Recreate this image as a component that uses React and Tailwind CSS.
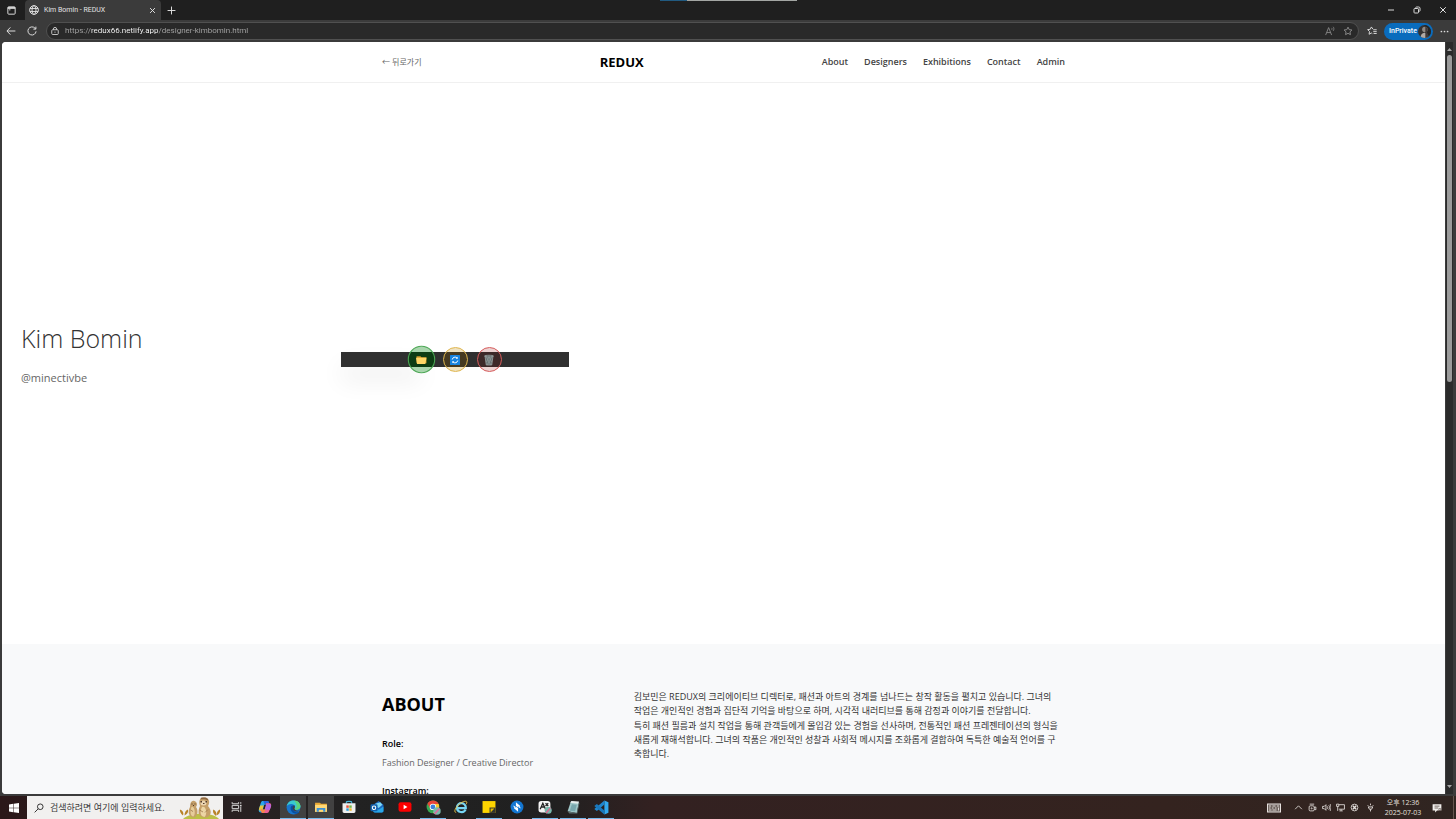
import React from "react";

const navLinks = ["About", "Designers", "Exhibitions", "Contact", "Admin"];

function Svg({ className, children, box = "0 0 16 16" }) {
  return (
    <svg viewBox={box} className={className} fill="none" stroke="currentColor" aria-hidden="true">
      {children}
    </svg>
  );
}

const StarPath = "M8 1.8l1.9 4 4.4.6-3.2 3 .8 4.4L8 11.7l-3.900 2.1.8-4.400-3.200-3 4.400-.600z";

function TabStrip() {
  return (
    <div className="relative flex h-5 shrink-0 items-stretch bg-[#1f1f1f] text-[#e3e3e3]">
      <div className="absolute inset-x-0 top-0 flex h-px justify-center">
        <span className="w-[27px] bg-[#215a80]" />
        <span className="w-[110px] bg-[#a3a6a3]" />
      </div>
      <button aria-label="Tab actions" className="flex w-[25px] items-center pl-[7px]">
        <Svg className="size-[9px]">
          <rect x="1.500" y="1.500" width="13" height="13" rx="1.500" strokeWidth="1.700" />
          <path d="M1.500 3.500h13" strokeWidth="3" />
          <path d="M5 4v4" strokeWidth="1.500" />
        </Svg>
      </button>
      <div className="flex w-[136px] items-center rounded-t-[4px] bg-[#3b3b3b] pl-1 pr-[5px]">
        <Svg className="size-[10px]">
          <circle cx="8" cy="8" r="7" strokeWidth="1.500" />
          <ellipse cx="8" cy="8" rx="3.200" ry="7" strokeWidth="1.500" />
          <path d="M1.500 5.500h13M1.500 10.500h13" strokeWidth="1.500" />
        </Svg>
        <span className="ml-[5px] flex-1 whitespace-nowrap font-[Roboto,sans-serif] text-[7px] leading-3">Kim Bomin - REDUX</span>
        <button aria-label="Close tab">
          <Svg className="size-[7px]"><path d="M2.500 2.500l11 11M13.500 2.500l-11 11" strokeWidth="2.200" /></Svg>
        </button>
      </div>
      <button aria-label="New tab" className="ml-[6px] flex items-center">
        <Svg className="size-[9px]"><path d="M8 1v14M1 8h14" strokeWidth="1.700" /></Svg>
      </button>
      <div className="ml-auto flex items-center gap-[18px] pr-[9px]">
        <button aria-label="Minimize"><Svg className="size-2"><path d="M2 8h12" strokeWidth="1.900" /></Svg></button>
        <button aria-label="Restore">
          <Svg className="size-2">
            <rect x="2" y="5" width="9" height="9" rx="1.500" strokeWidth="1.900" />
            <path d="M5 3.500C5.500 2.500 6 2 7 2h4.500C13 2 14 3 14 4.500V9c0 1-.500 1.500-1.500 2" strokeWidth="1.900" />
          </Svg>
        </button>
        <button aria-label="Close"><Svg className="size-2"><path d="M2.500 2.500l11 11M13.500 2.500l-11 11" strokeWidth="2" /></Svg></button>
      </div>
    </div>
  );
}

function Toolbar() {
  return (
    <div className="flex h-[22px] shrink-0 items-center bg-[#3b3b3b] text-[#dcdcdc]">
      <button aria-label="Back" className="ml-[6px]">
        <Svg className="size-[10px]"><path d="M15 8H1.500M7 2.200L1.500 8 7 13.800" strokeWidth="1.600" /></Svg>
      </button>
      <button aria-label="Refresh" className="ml-[11px]">
        <Svg className="size-[10px]"><path d="M14.500 8.500A6.500 6.500 0 1 1 12.800 3.500L14 4.800M14.200 1v4h-4" strokeWidth="1.600" /></Svg>
      </button>
      <div className="ml-[9px] flex h-[18px] flex-1 items-center rounded-full border border-[#505050] bg-[#292929] pl-1 pr-[5px]">
        <Svg className="size-2">
          <rect x="1.500" y="5.500" width="13" height="9.500" rx="1.800" strokeWidth="1.700" />
          <path d="M4.800 5.500V4a3.200 3.200 0 0 1 6.400 0v1.500" strokeWidth="1.700" />
          <circle cx="8" cy="10.200" r="1.200" fill="currentColor" stroke="none" />
        </Svg>
        <input
          aria-label="Address"
          defaultValue="https://redux66.netlify.app/designer-kimbomin.html"
          className="ml-[6px] h-3 min-w-0 flex-1 bg-[linear-gradient(90deg,#a8a8a8_26px,#ffffff_26px,#ffffff_93px,#a8a8a8_93px)] bg-clip-text font-[Roboto,sans-serif] text-[8px] leading-3 text-transparent outline-none"
        />
        <button aria-label="Read aloud" className="text-[#8c8c8c]">
          <Svg className="size-[10px]">
            <path d="M1 14.500L5.800 2.500l4.800 12M2.800 10.500h6" strokeWidth="1.400" />
            <path d="M10.500 3c.9.900.9 2.300 0 3.200M13 1.200c1.700 2 1.700 4.700 0 6.700" strokeWidth="1.200" />
          </Svg>
        </button>
        <button aria-label="Add to favorites" className="ml-2 text-[#8c8c8c]">
          <Svg className="size-[10px]"><path d={StarPath} strokeWidth="1.500" strokeLinejoin="round" /></Svg>
        </button>
      </div>
      <button aria-label="Favorites" className="ml-2">
        <Svg className="size-[10px]">
          <path d="M9.500 5L7 1.500 5.200 5.200 1 5.800l3 3-.700 4.400L7 11.200l1.500 1M10 6h5.500M10 9h5.500M10.500 12h5" strokeWidth="1.500" />
        </Svg>
      </button>
      <button className="ml-[7px] flex h-[17px] w-[49px] items-center justify-between whitespace-nowrap rounded-full bg-[#0a6cbd] pl-[5px] pr-[2px] font-[Roboto,sans-serif] text-[7px] font-medium leading-3 text-white">
        InPrivate
        <Svg className="size-[13px] shrink-0 rounded-full">
          <rect width="16" height="16" fill="#343232" stroke="none" />
          <path d="M8 0h8v16H9z" fill="#252525" stroke="none" />
          <circle cx="8.500" cy="5.600" r="3.400" fill="#8f8984" stroke="none" />
          <path d="M3 16c0-4 2-6 5-6.500 3 .500 5 2.500 5 6.500z" fill="#b1aaa5" stroke="none" />
          <path d="M9 2.500c3 0 4 3 2 6L14 16H9z" fill="#3f3938" stroke="none" />
        </Svg>
      </button>
      <button aria-label="Settings and more" className="ml-[7px] mr-[7px]">
        <Svg className="size-[9px]">
          <g fill="currentColor" stroke="none"><circle cx="2.500" cy="8" r="1.500" /><circle cx="8" cy="8" r="1.500" /><circle cx="13.500" cy="8" r="1.500" /></g>
        </Svg>
      </button>
    </div>
  );
}

function SiteHeader() {
  return (
    <header className="h-[41px] shrink-0 border-b border-[#f0f0f0] bg-white">
      <div className="mx-auto flex h-full max-w-[683px] items-center justify-between">
        <a href="#back" className="text-[8px] leading-3 text-[#666666]">← 뒤로가기</a>
        <a href="#home" className="text-[13px] font-bold leading-5 text-black">REDUX</a>
        <nav className="flex gap-4 text-[9px] font-semibold leading-3 text-[#444444]">
          {navLinks.map((label) => <a key={label} href={"#" + label.toLowerCase()}>{label}</a>)}
        </nav>
      </div>
    </header>
  );
}

function FilmControls() {
  const base = "flex size-[25px] items-center justify-center rounded-full border ";
  return (
    <div className="relative flex h-[15px] w-[228px] items-center justify-center gap-[9px] bg-[#303030]">
      <span className="absolute inset-y-0 left-0 -z-10 w-[80px] shadow-[0_14px_24px_rgba(0,0,0,0.07)]" />
      <button aria-label="Upload" className={base + "scale-110 border-[#4aa653] bg-[linear-gradient(#a9d5ad_5px,#0d3d14_5px,#0d3d14_18px,#a9d5ad_18px)]"}>
        <Svg className="h-[9px] w-[11px]" box="0 0 22 18">
          <path d="M2 3h7l2 2h9v11H2z" fill="#d49b2a" stroke="none" />
          <path d="M1 6h19l-2 11H3z" fill="#ffd767" stroke="none" />
        </Svg>
      </button>
      <button aria-label="Replace" className={base + "border-[#dfb64e] bg-[linear-gradient(#efe2c2_4px,#463a21_4px,#463a21_19px,#efe2c2_19px)]"}>
        <Svg className="size-[10px]" box="0 0 20 20">
          <rect width="20" height="20" rx="1" fill="#1683e0" stroke="none" />
          <path d="M4.500 9a5.600 5.600 0 0 1 9.500-3M15.500 11a5.600 5.600 0 0 1-9.500 3" stroke="#fff" strokeWidth="2" />
          <path d="M15.500 3.500v4h-4zM4.500 16.500v-4h4z" fill="#fff" stroke="none" />
        </Svg>
      </button>
      <button aria-label="Delete" className={base + "border-[#d65c5c] bg-[linear-gradient(#ecd2d2_4px,#3d2929_4px,#3d2929_19px,#ecd2d2_19px)]"}>
        <Svg className="h-[12px] w-[10px]" box="0 0 20 24">
          <path d="M2 4h16l-2.500 18h-11z" fill="#687273" stroke="#9da7a7" strokeWidth="1.500" />
          <path d="M5 6l8 15M10 6l5 10M15 6L7 21M10 6L5 16" stroke="#a4adad" strokeWidth="1" />
          <path d="M1 4c0-2 18-2 18 0s-18 2-18 0z" fill="#394141" stroke="#adb5b5" strokeWidth="1.300" />
        </Svg>
      </button>
    </div>
  );
}

function Hero() {
  return (
    <section className="relative z-0 flex h-[561px] shrink-0 items-center bg-white pb-2 pl-[19px]">
      <div className="w-[320px] pb-[14px]">
        <h1 className="text-[25px] font-light leading-9 text-[#333333]">Kim Bomin</h1>
        <p className="mt-[14px] text-[11px] leading-4 text-[#666666]">@minectivbe</p>
      </div>
      <FilmControls />
    </section>
  );
}

function About() {
  return (
    <section className="shrink-0 bg-[#f8f9fa] py-[46px]">
      <div className="mx-auto grid max-w-[683px] grid-cols-[1fr_2fr] gap-9">
        <div>
          <h2 className="pt-[2px] text-[18px] font-bold leading-6 text-black">ABOUT</h2>
          <dl className="mt-[22px] text-[9px]">
            <dt className="font-semibold leading-3 text-black">Role:</dt>
            <dd className="mt-[7px] leading-3 text-[#666666]">Fashion Designer / Creative Director</dd>
            <dt className="mt-4 font-semibold leading-3 text-black">Instagram:</dt>
          </dl>
        </div>
        <div className="whitespace-nowrap text-[9px] leading-[14px] text-[#333333]">
          <p>
            김보민은 REDUX의 크리에이티브 디렉터로, 패션과 아트의 경계를 넘나드는 창작 활동을 펼치고 있습니다. 그녀의<br />
            작업은 개인적인 경험과 집단적 기억을 바탕으로 하며, 시각적 내러티브를 통해 감정과 이야기를 전달합니다.
          </p>
          <p className="mt-px">
            특히 패션 필름과 설치 작업을 통해 관객들에게 몰입감 있는 경험을 선사하며, 전통적인 패션 프레젠테이션의 형식을<br />
            새롭게 재해석합니다. 그녀의 작품은 개인적인 성찰과 사회적 메시지를 조화롭게 결합하여 독특한 예술적 언어를 구<br />
            축합니다.
          </p>
        </div>
      </div>
    </section>
  );
}

function Scrollbar() {
  return (
    <div className="flex w-[7px] shrink-0 flex-col items-center bg-[#2b2b2b] py-[5px]">
      <Svg className="h-[5px] w-[5px] shrink-0" box="0 0 10 10"><path d="M0 8l5-6 5 6z" fill="#a5a5a5" stroke="none" /></Svg>
      <div className="flex w-full flex-1 flex-col items-center py-[3px]">
        <div className="h-[45%] w-[5px] rounded-full bg-[#9b9b9b]" />
      </div>
      <Svg className="h-[5px] w-[5px] shrink-0" box="0 0 10 10"><path d="M0 2l5 6 5-6z" fill="#a5a5a5" stroke="none" /></Svg>
    </div>
  );
}

const apps = [
  { name: "Task view", art: (
    <g stroke="#d8d8d8" strokeWidth="1.800" fill="none"><path d="M4 4v3h12V4M4 22v-3h12v3M4 10h12v6H4zM20 4v3M20 13v9" /><path d="M18.500 9h3v3h-3z" fill="#d8d8d8" stroke="none" /></g>) },
  { name: "Copilot", art: (
    <g>
      <path d="M9 2h8c2 0 3 1 3.500 3l1 3h-7L11 20c-.500 2-1.500 3-3.500 3H5c-4 0-4-4-3-7L5 6c1-3 2-4 4-4z" fill="#2aa8e8" />
      <path d="M9 2h8c2 0 3 1 3.500 3l1 3h-7c-2 0-3-1-3.500-3S10 2 9 2z" fill="#2864e0" />
      <path d="M2 16l2-6h7l-3 10H4c-2 0-2.500-2-2-4z" fill="#e9c53c" />
      <path d="M17 24H9c-2 0-3-1-3.500-3l-1-3h7L15 6h6c4 0 4 4 3 7l-3 7c-1 3-2 4-4 4z" fill="#eb5f91" />
      <path d="M15 8h6c4 0 3 3 2.500 5L22 18h-9z" fill="#ae66e8" />
      <path d="M9 24c2 0 3-1 4-4l1-3h-8l-1 1c1 4 2 6 4 6z" fill="#f58a45" />
      <path d="M11.500 9h3l-2.200 8h-3z" fill="#252023" />
    </g>) },
  { name: "Microsoft Edge", active: true, wide: true, art: (
    <g>
      <circle cx="13" cy="13" r="12" fill="#1676ce" />
      <path d="M1.200 11C2.500 4 7.500 1 13 1c7 0 12 5 12 10 0 4-3 6-6.500 6-3 0-4-1-4-2 0-1 1-1 1-3 0-3-3-5-6.500-5C5 7 2 9 1.200 11z" fill="#39c8d0" />
      <path d="M14 1c7 0 11 5 11 10 0 4-3 6-6.500 6-3 0-4-1-4-2 3 0 5-3 4-6-1-4-3-6-4.500-8z" fill="#5bd27c" />
      <path d="M9 11c-3 5 1 13 9 13 2 0 4-1.500 5-3-5 1-10-1-10.500-6C12 12 14 11 15 10c-2-1-5 0-6 1z" fill="#0b4e9e" />
      <path d="M14.500 14c1-1 1-1 1-2 0-1-.500-2-1.500-3-3 2-3 8 1 10s7 1 8-1c-4 1.500-8 1-8.500-4z" fill="#41403f" />
    </g>) },
  { name: "File Explorer", active: true, art: (
    <g>
      <path d="M2 5h9l2 2h11v15H2z" fill="#e9a935" />
      <path d="M2 9h22v13H2z" fill="#ffd978" />
      <path d="M5 22v-7h16v7h-4v-4H9v4z" fill="#3d91d5" />
    </g>) },
  { name: "Microsoft Store", art: (
    <g>
      <path d="M8 7V4c0-2 10-2 10 0v3" stroke="#4ab7dc" strokeWidth="2" fill="none" />
      <path d="M1 6h24v15c0 2-1 3-3 3H4c-2 0-3-1-3-3z" fill="#eeeeee" />
      <path d="M8 10h4.500v4.500H8z" fill="#e85238" /><path d="M13.500 10H18v4.500h-4.500z" fill="#76b943" /><path d="M8 15.500h4.500V20H8z" fill="#299ddb" /><path d="M13.500 15.500H18V20h-4.500z" fill="#f0b72b" />
    </g>) },
  { name: "Outlook", art: (
    <g>
      <path d="M6 9l10-7 9 7v11c0 2-1 3-3 3H9c-2 0-3-1-3-3z" fill="#1c67bd" />
      <path d="M10 7l9-3 4 5-7 6-7-4z" fill="#7ed7f4" />
      <path d="M6 12l10 6 9-6v8c0 2-1 3-3 3H9c-2 0-3-1-3-3z" fill="#29a7e8" />
      <rect x="1" y="8" width="13" height="13" rx="2" fill="#1260ac" />
      <circle cx="7.500" cy="14.500" r="3.200" fill="none" stroke="#fff" strokeWidth="1.900" />
    </g>) },
  { name: "YouTube", art: (
    <g><rect x="1" y="4" width="24" height="18" rx="4" fill="#fb0000" /><path d="M10.500 9v8l7-4z" fill="#fff" /></g>) },
  { name: "Chrome", running: true, wide: true, art: (
    <g>
      <circle cx="12" cy="12" r="11" fill="#36a853" />
      <path d="M2.500 6.500A11 11 0 0 1 22 7H12l-4.500 8z" fill="#e84538" />
      <path d="M22 7c3 8-2 16-10 16l5-9-2-7z" fill="#f9c72f" />
      <circle cx="12" cy="12" r="5.500" fill="#fff" /><circle cx="12" cy="12" r="4.200" fill="#3c80dd" />
      <circle cx="19" cy="19" r="6.500" fill="#78b9ad" /><path d="M14 23l8-9 2 2-8 9z" fill="#d96e9d" />
    </g>) },
  { name: "Internet Explorer", art: (
    <g fill="none">
      <path d="M21.500 18c-3 7-16 6-16-4 0-11 17-11 16.500 1H6" stroke="#77d5f4" strokeWidth="4" />
      <path d="M4 23c-7 0 2-16 14-20 6-2 7 1 4.500 5" stroke="#eac54b" strokeWidth="1.800" />
    </g>) },
  { name: "Sticky Notes", running: true, art: (
    <g><path d="M1 2h24v22H1z" fill="#ffd500" /><path d="M14 24V14h11v10z" fill="#323232" /><path d="M16 16h7l-7 7z" fill="#e5bd00" /></g>) },
  { name: "Remote support", art: (
    <g>
      <circle cx="13" cy="13" r="12" fill="#1376d1" />
      <path d="M11 4l8 7-5 2-3-2zM15 22l-8-7 5-2 3 2z" fill="#fff" />
      <path d="M6 10l5 3-3 2zM20 16l-5-3 3-2z" fill="#fff" />
    </g>) },
  { name: "Design app", running: true, art: (
    <g>
      <rect x="1" y="2" width="22" height="21" rx="5" fill="#f4f4f4" />
      <path d="M4 17L9 6l5 11M6 13h6M14 6l5 5M19 6l-5 5" stroke="#202020" strokeWidth="2.400" fill="none" />
      <circle cx="19" cy="19" r="6.500" fill="#78b9ad" /><path d="M14 23l8-9 2 2-8 9z" fill="#e06691" />
    </g>) },
  { name: "Notepad", running: true, art: (
    <g><path d="M9 3l15 1-4 20-17-3z" fill="#9fc7c8" /><path d="M10 2l14 1-1 4L8 5z" fill="#e8eeee" /><path d="M11 8l9 1-3 12-10-1z" fill="#78a7ad" /><path d="M3 21l17 3 4-20 1 2-4 19H6z" fill="#5d6f70" /></g>) },
  { name: "Visual Studio Code", running: true, wide: true, art: (
    <g>
      <path d="M18 1l7 3v18l-7 3z" fill="#33a9ee" />
      <path d="M18 1v7L5 19l-4-3v-1z" fill="#1f86ce" />
      <path d="M1 10l4-3 13 11v7L1 11z" fill="#1a78bd" />
    </g>) },
];

function Meerkats() {
  return (
    <svg viewBox="0 0 84 44" className="h-[22px] w-[42px] shrink-0" aria-hidden="true">
      <path d="M8 44C20 31 68 29 80 44z" fill="#bcbf45" />
      <path d="M8 37C3 33 1 28 2 25c6 2 8 7 6 12zM11 37c0-7 3-11 7-12 1 5-1 9-7 12zM74 38c-6-5-7-10-5-13 5 3 7 7 5 13zM75 37c0-6 3-11 7-12 1 6-2 10-7 12z" fill="#b98329" />
      <path d="M22 20c0-10 4-14 9-12 6 2 6 9 3 12 5 6 4 18-4 21-11-1-13-12-8-21z" fill="#c49f6a" />
      <path d="M25 20c6-3 9 14 4 19-7 0-7-11-4-19z" fill="#e6cc9a" />
      <path d="M42 18c-4-12 1-17 9-17 9 0 12 9 7 17 8 9 8 21-5 23-14 0-17-10-11-23z" fill="#c59f68" />
      <path d="M46 20c9-3 11 16 5 20-10-1-9-13-5-20z" fill="#ecd5a4" />
      <ellipse cx="49" cy="12" rx="6" ry="5" fill="#ecd5b0" />
      <path d="M43 8h3v3h-3zM53 8h3v3h-3zM48 12h3v2h-3zM25 13h2v2h-2zM31 13h2v2h-2zM28 16h2v2h-2z" fill="#4f3829" />
      <path d="M43 5c0-5 4-4 7-4 7 0 9 4 8 6-5-3-10-3-15-2z" fill="#8d6842" />
      <path d="M41 26l7 4M58 25l-6 6M23 26l5 3" fill="none" stroke="#987348" strokeWidth="1.500" />
    </svg>
  );
}

const tray = [
  <path key="a" d="M2 11l6-6 6 6" />,
  <g key="b"><rect x="2" y="5" width="9" height="9" rx="2" /><circle cx="6.500" cy="9.500" r="1" /><path d="M11 8l3-1v5l-3-1M3 2h8" /></g>,
  <g key="c"><path d="M1 6h3l3-3v10L4 10H1zM9.500 6c1 1.500 1 3 0 4.500M12 4c2 2.500 2 5.500 0 8M14.500 2c2 4 2 8 0 12" /></g>,
  <g key="d"><path d="M5 3h10v8H5M9 11v3M6 14h6M1 2h4v4H1zM3 6v8" /></g>,
  <g key="e"><circle cx="8" cy="8" r="6" /><path d="M5 5l6 6M11 5l-6 6" strokeWidth="2.500" /></g>,
];

function Taskbar() {
  return (
    <footer className="flex h-[23px] shrink-0 items-stretch bg-[linear-gradient(90deg,#2b1819_0%,#292122_16%,#222222_24%,#202020_38%,#332121_45%,#34231f_80%,#302521_100%)] text-[#e5e0dd]">
      <button aria-label="Start" className="flex w-[27px] items-center justify-center">
        <svg viewBox="0 0 20 20" className="size-[10px]" fill="#ffffff" aria-hidden="true"><path d="M0 2.800l8.500-1.200v7.900H0zM9.500 1.500L20 0v9.500H9.500zM0 10.500h8.500v7.900L0 17.200zM9.500 10.500H20V20L9.500 18.500z" /></svg>
      </button>
      <label className="flex w-[196px] items-center bg-[#f1f0ef] pl-[7px] pr-[2px] text-[#2b2b2b]">
        <Svg className="size-[10px]"><circle cx="10" cy="6" r="4.500" strokeWidth="1.500" /><path d="M6.800 9.200L1 15" strokeWidth="1.500" /></Svg>
        <input aria-label="Windows search" placeholder="검색하려면 여기에 입력하세요." className="ml-[6px] h-4 min-w-0 flex-1 bg-transparent text-[9px] leading-4 outline-none placeholder:text-[#3b3b3b]" />
        <Meerkats />
      </label>
      <div className="flex items-stretch">
        {apps.map((app) => (
          <button key={app.name} aria-label={app.name} className="flex w-7 justify-center">
            <span className={"flex w-[26px] items-center justify-center border-b " + (app.active ? "border-[#76b9ed] bg-[#414141]" : app.running ? "border-[#76b9ed]" : "border-transparent")}>
              <svg viewBox="0 0 26 26" className={app.wide ? "size-[15px]" : "size-[14px]"} aria-hidden="true">{app.art}</svg>
            </span>
          </button>
        ))}
      </div>
      <div className="ml-auto flex items-center">
        <button aria-label="Touch keyboard" className="mr-[13px]">
          <Svg className="h-[10px] w-[14px]" box="0 0 28 20"><rect x="1" y="2" width="26" height="16" fill="#6f6460" strokeWidth="2" /><path d="M4 6h4M11 6h6M20 6h4M4 10h3M10 10h3M16 10h3M4 14h5M11 14h8M23 9v6" strokeWidth="1.800" /></Svg>
        </button>
        <div className="flex gap-[5px]">
          {tray.map((icon, i) => <Svg key={i} className="size-[9px]"><g strokeWidth="1.500">{icon}</g></Svg>)}
        </div>
        <Svg className="ml-[7px] size-[9px]"><path d="M8 1v3M3 4l2 2M13 4l-2 2M4 7h8l-2 4H6zM8 11v4" strokeWidth="1.600" /></Svg>
        <button className="ml-2 w-[40px] whitespace-nowrap text-center text-[7px] leading-[10px]">
          <span className="block">오후 12:36</span>
          <span className="block">2025-07-03</span>
        </button>
        <button aria-label="Notifications" className="ml-[9px]">
          <Svg className="size-[10px]"><path d="M1 2h14v10H8l-3 3v-3H1z" fill="#f1eeeb" stroke="none" /><path d="M4 5h8M4 8h6" stroke="#5d504b" strokeWidth="1.300" /><path d="M11 9h3v3h-3z" stroke="#5d504b" /></Svg>
        </button>
        <span className="ml-[11px] mr-[2px] h-[23px] w-px bg-[#65564f]" />
      </div>
    </footer>
  );
}

export default function App() {
  return (
    <div lang="ko" className="flex h-screen flex-col overflow-hidden bg-[#3b3b3b] font-['Open_Sans','Noto_Sans_CJK_KR',sans-serif]">
      <TabStrip />
      <Toolbar />
      <div className="flex min-h-0 flex-1 pb-[2px] pl-[2px] pr-[3px]">
        <main className="mr-px flex min-h-0 min-w-0 flex-1 flex-col overflow-hidden rounded-l-[4px] bg-[#f8f9fa]">
          <SiteHeader />
          <Hero />
          <About />
        </main>
        <Scrollbar />
      </div>
      <Taskbar />
    </div>
  );
}
